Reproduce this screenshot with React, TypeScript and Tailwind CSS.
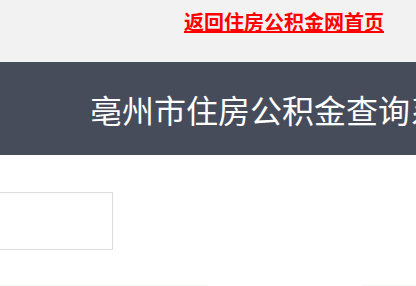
import React from "react";

export default function App() {
  const font = { fontFamily: '"Noto Sans CJK SC", "Noto Sans", sans-serif' };
  return (
    <div className="w-[416px] h-[286px] overflow-hidden bg-white" style={font}>
      <div className="h-[62px] bg-[#f2f2f2] flex items-start">
        <a
          href="#"
          className="ml-[184px] mt-[10px] text-[20px] leading-[24px] font-bold text-[#ff0000] underline whitespace-nowrap"
        >
          返回住房公积金网首页
        </a>
      </div>
      <div className="h-[93px] bg-[#464c59] flex items-center overflow-hidden">
        <div className="ml-[90px] text-[32px] leading-[40px] text-white whitespace-nowrap">
          亳州市住房公积金查询系统
        </div>
      </div>
      <div className="pt-[37px]">
        <div className="w-[113px] h-[58px] border-y border-r border-[#dddddd] bg-white" />
      </div>
      <div className="mt-[35px] flex h-[1px]">
        <div className="w-[208px] bg-[#f3faf3]" />
        <div className="w-[154px]" />
        <div className="flex-1 bg-[#f3faf3]" />
      </div>
    </div>
  );
}
